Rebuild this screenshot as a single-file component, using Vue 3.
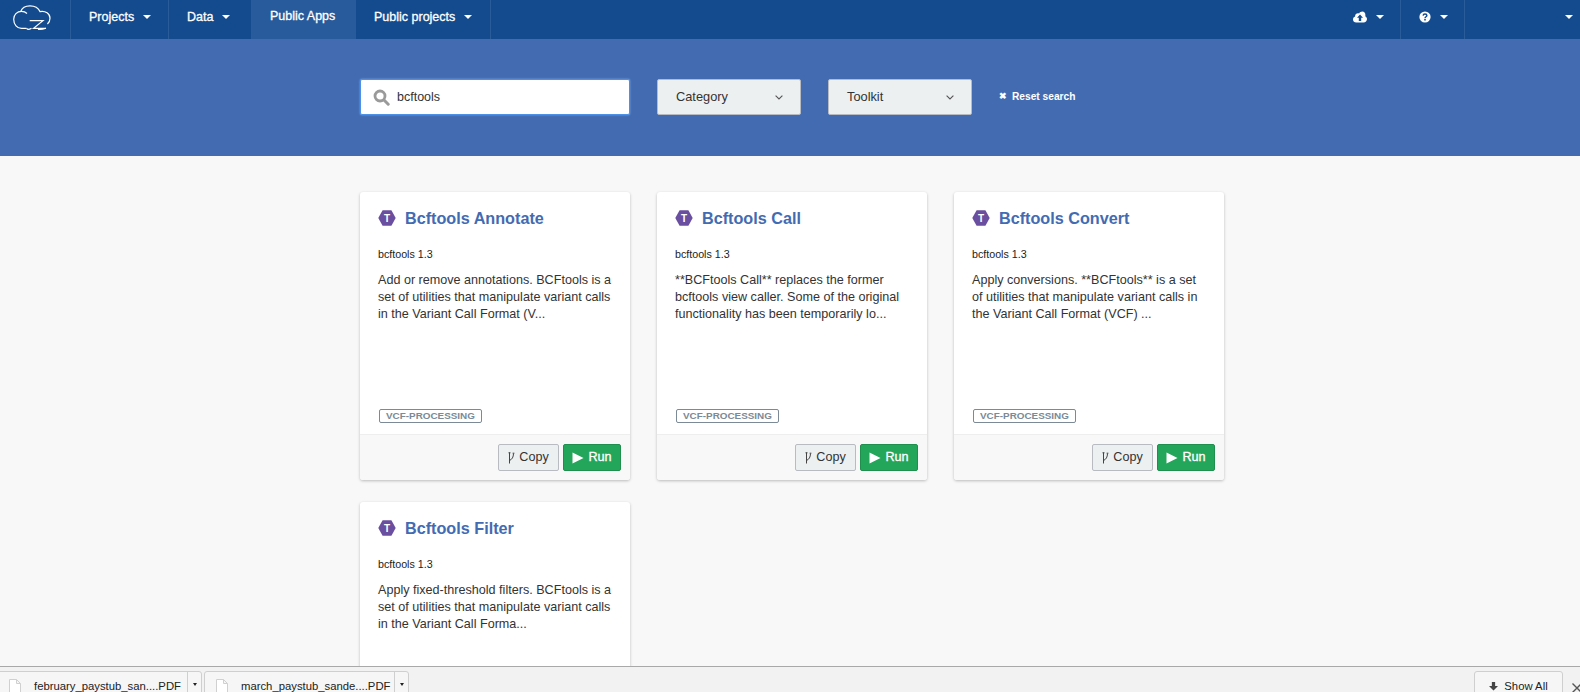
<template>
  <div class="page">
    <nav class="navbar">
      <a class="brand">
        <svg width="40" height="26" viewBox="0 0 40 26" fill="none" stroke="#fff" stroke-width="1.2">
          <path d="M15 8.5C13.5 7 11.5 6.4 9.5 6.4C5 6.4 1.7 9.8 1.7 14.2C1.7 19.6 5.2 23.3 9.5 23.3H14.5" />
          <path d="M8.6 6.6C10 2.8 14 .8 18 .8C22.6 .8 26.4 3 28 6.6C33.5 5.6 38 8.6 38 13.2C38 15.5 37 17.6 35.4 19" />
          <path d="M17.7 15.7H31L21.5 23.3H34" />
          <path d="M14.5 23.3C15.5 24.6 18 24.6 19.5 23.3M26 24.3C28 24.8 31 24.3 34 23.3" />
        </svg>
      </a>
      <a v-for="item in navItems" :key="item.label" class="nav-item" :class="item.cls">
        {{ item.label }}<span v-if="item.caret" class="caret"></span>
      </a>
      <div class="nav-spacer"></div>
      <a class="nav-icon nav-upload">
        <svg width="14" height="12" viewBox="0 0 14 12">
          <path fill="#fff" d="M3.2 11.5C1.4 11.5 0 10.1 0 8.4C0 7 .9 5.9 2.1 5.5C2.1 5.3 2.1 5.2 2.1 5C2.1 3.4 3.4 2.2 5 2.2C5.4 2.2 5.8 2.3 6.1 2.4C6.8 1.2 8 .5 9.3 .5C11.2 .5 12.4 2 12.4 3.9C12.4 4.4 12.4 4.8 12.2 5.2C13.3 5.7 14 6.8 14 8.1C14 10 12.5 11.5 10.6 11.5Z" />
          <path fill="#134b8e" d="M7 3.6L10 6.8H8.2V10H5.8V6.8H4Z" />
        </svg>
        <span class="caret"></span>
      </a>
      <a class="nav-icon nav-help">
        <svg width="12" height="12" viewBox="0 0 12 12">
          <circle cx="6" cy="6" r="5.6" fill="#fff" />
          <path d="M4.1 4.6C4.2 3.5 5 3 6 3C7.1 3 7.9 3.6 7.9 4.5C7.9 5.7 6 5.8 6 7.2" fill="none" stroke="#134b8e" stroke-width="1.4" />
          <rect x="5.2" y="8" width="1.6" height="1.5" fill="#134b8e" />
        </svg>
        <span class="caret"></span>
      </a>
      <a class="nav-user"><span class="caret"></span></a>
    </nav>

    <section class="hero">
      <div class="filters">
        <div class="search">
          <svg width="17" height="17" viewBox="0 0 17 17" fill="none" stroke="#9a9a9a" class="search-icon">
            <circle cx="7" cy="7" r="5" stroke-width="2.8" />
            <path d="M11 11L15.2 15.2" stroke-width="3" stroke-linecap="round" />
          </svg>
          <span class="search-text">bcftools</span>
        </div>
        <div v-for="f in ['Category', 'Toolkit']" :key="f" class="select">
          <span class="select-text">{{ f }}</span>
          <svg width="8" height="5" viewBox="0 0 8 5" fill="none" stroke="#555" stroke-width="1.1">
            <path d="M.6 .6L4 4L7.4 .6" />
          </svg>
        </div>
        <a class="reset"><span class="reset-x">✖</span>Reset search</a>
      </div>
    </section>

    <main class="content">
      <div class="grid">
        <article v-for="app in apps" :key="app.title" class="card">
          <div class="card-body">
            <h3 class="card-title">
              <svg width="18" height="16" viewBox="0 0 18 16">
                <path fill="#6a4ea0" d="M4.6 .3H13.4L17.7 8L13.4 15.7H4.6L.3 8Z" />
                <text x="9" y="11.6" text-anchor="middle" class="hex-t">T</text>
              </svg>
              <span>{{ app.title }}</span>
            </h3>
            <div class="toolkit">bcftools 1.3</div>
            <p class="desc">{{ app.desc }}</p>
            <span class="tag">VCF-PROCESSING</span>
          </div>
          <div class="card-foot">
            <button class="btn btn-copy">
              <svg width="7" height="12" viewBox="0 0 7 12" fill="none" stroke="#444" stroke-width="1">
                <path d="M1.5 .5V11.5M1.5 8.5C4 7.5 5.5 5 5.5 1.5M.5 .8H2.5M4.6 1.2H6.4" />
              </svg>
              <span class="btn-text">Copy</span>
            </button>
            <button class="btn btn-run">
              <svg width="12" height="12" viewBox="0 0 12 12"><path fill="#fff" d="M.5 .5L11.5 6L.5 11.5Z" /></svg>
              <span class="btn-text">Run</span>
            </button>
          </div>
        </article>
      </div>
    </main>

    <footer class="downloads">
      <div v-for="d in downloads" :key="d" class="dl-item">
        <div class="dl-main">
          <svg width="12" height="18" viewBox="0 0 12 18" fill="#fff" stroke="#d0d0d0" stroke-width="1">
            <path d="M.5 .5H7.5L11.5 4.5V18H.5ZM7.5 .5V4.5H11.5" />
          </svg>
          <span class="dl-name">{{ d }}</span>
        </div>
        <div class="dl-menu"><span class="dl-caret"></span></div>
      </div>
      <div class="dl-spacer"></div>
      <button class="show-all">
        <svg class="show-arrow" width="9" height="9" viewBox="0 0 11 11"><path fill="#444" d="M3.5 0H7.5V5H11L5.5 10.5L0 5H3.5Z" /></svg>
        <span>Show All</span>
      </button>
      <svg class="dl-close" width="10" height="10" viewBox="0 0 10 10" stroke="#555" stroke-width="1.4">
        <path d="M.5 .5L9.5 9.5M9.5 .5L.5 9.5" />
      </svg>
    </footer>
  </div>
</template>

<script setup>
const navItems = [
  { label: "Projects", caret: true, cls: "nav-projects" },
  { label: "Data", caret: true, cls: "nav-data" },
  { label: "Public Apps", caret: false, cls: "nav-apps active" },
  { label: "Public projects", caret: true, cls: "nav-public" },
];

const apps = [
  {
    title: "Bcftools Annotate",
    desc: "Add or remove annotations. BCFtools is a set of utilities that manipulate variant calls in the Variant Call Format (V...",
  },
  {
    title: "Bcftools Call",
    desc: "**BCFtools Call** replaces the former bcftools view caller. Some of the original functionality has been temporarily lo...",
  },
  {
    title: "Bcftools Convert",
    desc: "Apply conversions. **BCFtools** is a set of utilities that manipulate variant calls in the Variant Call Format (VCF) ...",
  },
  {
    title: "Bcftools Filter",
    desc: "Apply fixed-threshold filters. BCFtools is a set of utilities that manipulate variant calls in the Variant Call Forma...",
  },
];

const downloads = ["february_paystub_san....PDF", "march_paystub_sande....PDF"];
</script>

<style>
html,
body {
  margin: 0;
  overflow: hidden;
}
</style>

<style scoped>
.page {
  height: 692px;
  display: flex;
  flex-direction: column;
  overflow: hidden;
  font-family: "Liberation Sans", Arial, sans-serif;
  background: #f8f8f8;
  color: #333;
}

.navbar {
  flex: none;
  height: 39px;
  display: flex;
  align-items: stretch;
  background: #134b8e;
  color: #fff;
  font-size: 12.5px;
  -webkit-text-stroke: 0.3px #fff;
}
.brand {
  width: 71px;
  flex: none;
  display: flex;
  align-items: center;
  padding: 0 0 3px 12px;
  box-sizing: border-box;
  border-right: 1px solid #2a5c9a;
}
.nav-item {
  display: flex;
  align-items: center;
  box-sizing: border-box;
  padding-left: 18px;
  padding-bottom: 5px;
  border-right: 1px solid #2a5c9a;
}
.nav-projects { width: 98px; }
.nav-data { width: 83px; }
.nav-apps {
  width: 104px;
  padding-left: 18px;
  padding-bottom: 7px;
  border-right: none;
  background: #285b9b;
}
.nav-public { width: 135px; padding-left: 18px; }
.caret {
  display: inline-block;
  margin-left: 9px;
  border-left: 4px solid transparent;
  border-right: 4px solid transparent;
  border-top: 4px solid #fff;
  -webkit-text-stroke: 0;
}
.nav-spacer { flex: 1; }
.nav-icon {
  display: flex;
  align-items: center;
  box-sizing: border-box;
  padding-bottom: 5px;
  border-right: 1px solid #2a5c9a;
}
.nav-icon .caret { margin-left: 9px; }
.nav-upload { width: 48px; }
.nav-help { width: 64px; padding-left: 18px; }
.nav-user {
  width: 115px;
  display: flex;
  align-items: center;
  justify-content: flex-end;
  padding: 0 7px 5px 0;
  box-sizing: border-box;
}

.hero {
  flex: none;
  height: 117px;
  background: #436bb2;
  box-sizing: border-box;
  padding: 40px 0 0 360px;
}
.filters {
  display: flex;
  align-items: center;
}
.search {
  width: 270px;
  height: 36px;
  box-sizing: border-box;
  background: #fff;
  border: 1px solid #4d90e8;
  box-shadow: 0 0 2px #7fb2f0;
  border-radius: 2px;
  display: flex;
  align-items: center;
  padding-left: 12px;
  font-size: 12.5px;
  color: #333;
}
.search-icon { margin-right: 7px; }
.search-text { padding-bottom: 1px; }
.select {
  width: 144px;
  height: 36px;
  margin-left: 27px;
  box-sizing: border-box;
  background: #ecf0f1;
  border: 1px solid #b8bcc2;
  border-radius: 2px;
  display: flex;
  align-items: center;
  justify-content: space-between;
  padding: 0 17px 0 18px;
  font-size: 12.8px;
}
.select-text { padding-bottom: 2px; }
.reset {
  margin-left: 27px;
  padding-bottom: 2px;
  color: #fff;
  font-size: 10.2px;
  font-weight: bold;
  display: flex;
  align-items: center;
}
.reset-x { font-size: 9px; margin-right: 5px; }

.content {
  flex: 1;
  min-height: 0;
  overflow: hidden;
  padding: 36px 0 0 360px;
}
.grid {
  display: grid;
  grid-template-columns: repeat(3, 270px);
  gap: 22px 27px;
}
.card {
  height: 288px;
  display: flex;
  flex-direction: column;
  background: #fff;
  border-radius: 3px;
  box-shadow: 0 1px 3px rgba(0, 0, 0, 0.25);
}
.card-body {
  flex: 1;
  display: flex;
  flex-direction: column;
  align-items: flex-start;
  padding: 0 18px;
}
.card-title {
  margin: 16px 0 0;
  display: flex;
  align-items: center;
  gap: 9px;
  font-size: 16.2px;
  line-height: 20px;
  color: #436bb2;
}
.hex-t {
  fill: #fff;
  font-size: 10px;
  font-weight: bold;
}
.toolkit {
  margin-top: 19px;
  font-size: 10.7px;
  line-height: 14px;
  color: #222;
}
.desc {
  margin: 11px 0 0;
  font-size: 12.6px;
  line-height: 17px;
  flex: 1;
}
.tag {
  margin-bottom: 11px;
  margin-left: 1px;
  border: 1px solid #7b8a96;
  border-radius: 2px;
  padding: 0 6px;
  font-size: 9.9px;
  line-height: 12px;
  font-weight: bold;
  color: #7b8a96;
}
.card-foot {
  flex: none;
  height: 46px;
  box-sizing: border-box;
  display: flex;
  justify-content: flex-end;
  align-items: center;
  gap: 4px;
  padding: 0 9px;
  background: #f8f8f8;
  border-top: 1px solid #eee;
  border-radius: 0 0 3px 3px;
}
.btn {
  height: 27px;
  box-sizing: border-box;
  display: flex;
  align-items: center;
  justify-content: center;
  border-radius: 2px;
  font-family: inherit;
  font-size: 12.6px;
  padding: 0;
}
.btn-text { padding-bottom: 2px; }
.btn-copy {
  width: 61px;
  gap: 4px;
  background: #ecf0f1;
  border: 1px solid #b8bcc2;
  color: #333;
}
.btn-run {
  width: 58px;
  gap: 4px;
  background: #24a65a;
  border: 1px solid #1f8f4e;
  color: #fff;
  -webkit-text-stroke: 0.3px #fff;
}

.downloads {
  flex: none;
  height: 26px;
  display: flex;
  align-items: flex-start;
  background: #f2f2f2;
  border-top: 1px solid #a9a9a9;
  box-sizing: border-box;
  font-size: 11.3px;
  color: #222;
  padding-top: 4px;
}
.dl-item {
  width: 205px;
  height: 30px;
  box-sizing: border-box;
  margin-right: 2px;
  flex: none;
  display: flex;
  background: #f6f6f6;
  border: 1px solid #cfcfcf;
  border-radius: 3px 3px 0 0;
}
.dl-item:first-child {
  margin-left: -3px;
}
.dl-main {
  flex: 1;
  display: flex;
  align-items: flex-start;
  padding: 7px 0 0 11px;
  border-right: 1px solid #cfcfcf;
}
.dl-name {
  margin-left: 13px;
  margin-top: 1px;
  white-space: nowrap;
}
.dl-menu {
  width: 13px;
  display: flex;
  justify-content: center;
  padding-top: 11px;
}
.dl-caret {
  width: 0;
  height: 0;
  border-left: 2.5px solid transparent;
  border-right: 2.5px solid transparent;
  border-top: 3px solid #222;
}
.dl-spacer { flex: 1; }
.show-all {
  width: 89px;
  height: 30px;
  box-sizing: border-box;
  border: 1px solid #cfcfcf;
  border-radius: 3px 3px 0 0;
  background: #f6f6f6;
  font-family: inherit;
  font-size: 11.3px;
  color: #222;
  display: flex;
  align-items: flex-start;
  justify-content: center;
  gap: 6px;
  padding: 8px 0 0;
}
.show-arrow { margin-top: 2px; }
.dl-close {
  margin: 12px -2px 0 9px;
  flex: none;
}
</style>
